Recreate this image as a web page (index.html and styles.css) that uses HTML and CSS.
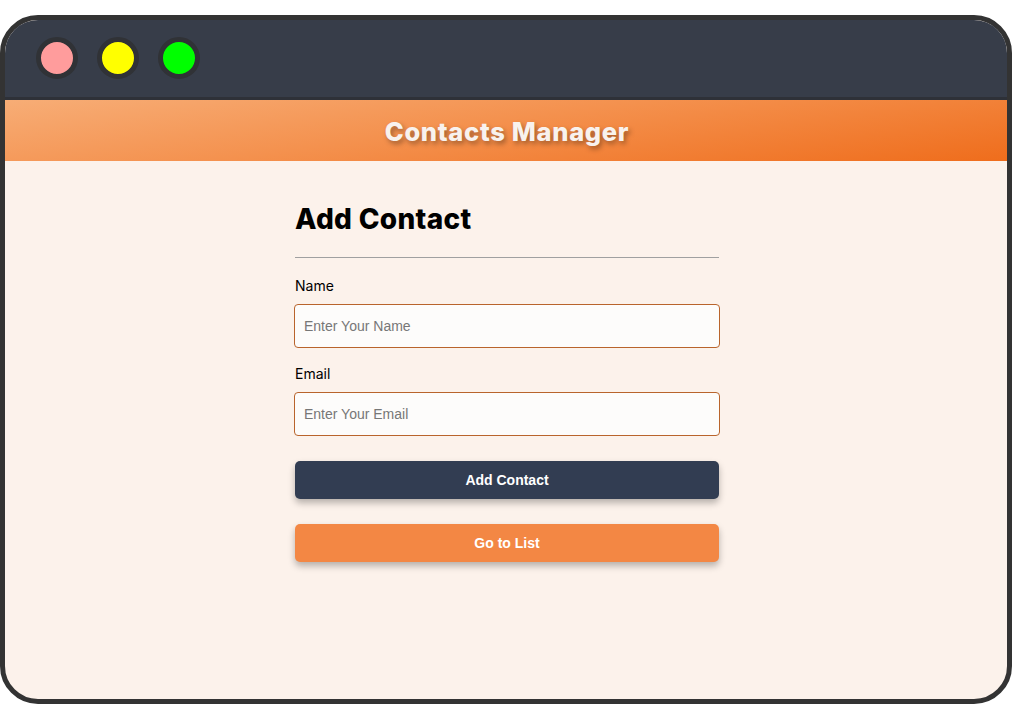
FILE: index.html
```html
<!DOCTYPE html>
<html lang="en">
<head>
<meta charset="utf-8">
<title>Contacts Manager</title>
<link rel="stylesheet" href="styles.css">
</head>
<body>
<div class="window">
  <div class="titlebar">
    <span class="light light-red"></span>
    <span class="light light-yellow"></span>
    <span class="light light-green"></span>
  </div>
  <header class="app-header">
    <h1 class="app-title">Contacts Manager</h1>
  </header>
  <main class="content">
    <form class="contact-form">
      <h2 class="form-title">Add Contact</h2>
      <hr class="divider">
      <label class="field-label" for="name">Name</label>
      <input class="field-input" id="name" type="text" placeholder="Enter Your Name">
      <label class="field-label field-label-second" for="email">Email</label>
      <input class="field-input" id="email" type="email" placeholder="Enter Your Email">
      <button class="btn btn-dark" type="button">Add Contact</button>
      <button class="btn btn-orange" type="button">Go to List</button>
    </form>
  </main>
</div>
</body>
</html>
```

FILE: styles.css
```css
* { box-sizing: border-box; }

html, body {
  margin: 0;
  padding: 0;
  background: #ffffff;
}

body {
  width: 1012px;
  height: 719px;
  overflow: hidden;
  font-family: "Inter", "Liberation Sans", sans-serif;
}

.window {
  margin-top: 15px;
  width: 1012px;
  height: 689px;
  border: 5px solid #333333;
  border-radius: 38px;
  overflow: hidden;
  background: #fcf2eb;
  display: flex;
  flex-direction: column;
}

.titlebar {
  height: 80px;
  flex: none;
  background: #373d49;
  border-bottom: 3px solid #2e3138;
  display: flex;
  align-items: center;
  gap: 19px;
  padding-left: 31px;
  padding-bottom: 2px;
}

.light {
  width: 42px;
  height: 42px;
  border-radius: 50%;
  border: 5px solid #303236;
  display: block;
}
.light-red { background: #ff9c9c; }
.light-yellow { background: #ffff00; }
.light-green { background: #00ff00; }

.app-header {
  height: 61px;
  flex: none;
  background: linear-gradient(172deg, #f7ad76 0%, #f4914e 45%, #ef6d1c 100%);
  display: flex;
  align-items: center;
  justify-content: center;
}

.app-title {
  margin: 0;
  font-family: "Inter", sans-serif;
  font-weight: 800;
  font-size: 25.5px;
  color: #f8f2ee;
  letter-spacing: 0.7px;
  text-shadow: 2px 3px 5px rgba(0, 0, 0, 0.35);
  padding-top: 2px;
  padding-left: 2px;
}

.content {
  flex: 1;
  display: flex;
  justify-content: center;
}

.contact-form {
  width: 426px;
  margin-left: 2px;
  padding-top: 38px;
  display: flex;
  flex-direction: column;
}

.form-title {
  margin: 0;
  font-family: "Inter", sans-serif;
  font-weight: 800;
  font-size: 28px;
  line-height: 40px;
  color: #000;
  letter-spacing: 0.3px;
  padding-left: 1px;
}

.divider {
  margin: 18px 1px 0 1px;
  border: 0;
  border-top: 1px solid #a0a0a0;
  height: 0;
}

.field-label {
  margin-top: 18px;
  font-size: 14px;
  line-height: 20px;
  color: #000;
  padding-left: 1px;
}

.field-label-second { margin-top: 16px; }

.field-input {
  margin-top: 8px;
  height: 44px;
  width: 100%;
  border: 1px solid #b9642c;
  border-radius: 4px;
  background: #fdfcfb;
  padding: 0 9px;
  font-family: "Liberation Sans", Arial, sans-serif;
  font-size: 14px;
  color: #333;
  outline: none;
}

.field-input::placeholder { color: #777777; }

.btn {
  margin: 25px 1px 0 1px;
  height: 38px;
  border: 0;
  border-radius: 5px;
  font-family: "Liberation Sans", Arial, sans-serif;
  font-weight: bold;
  font-size: 14px;
  color: #ffffff;
  box-shadow: 0 4px 7px rgba(0, 0, 0, 0.28);
  cursor: pointer;
}

.btn-dark { background: #323d52; }
.btn-orange { background: #f38744; }
```
